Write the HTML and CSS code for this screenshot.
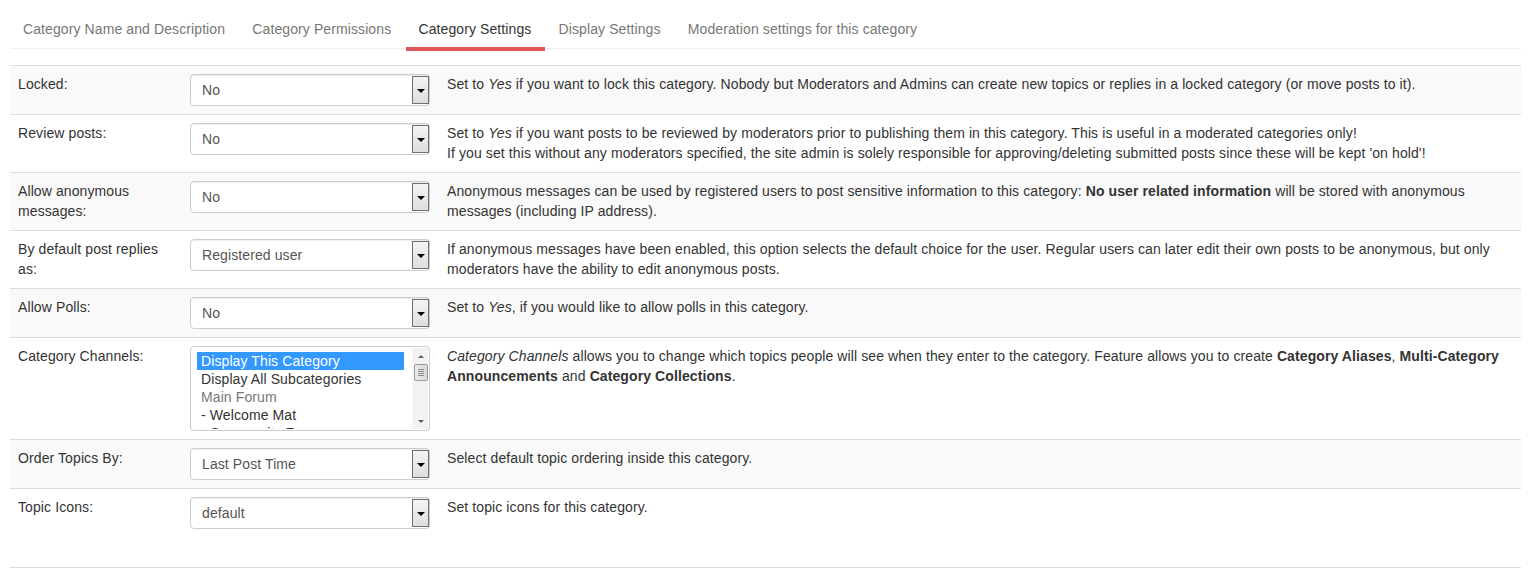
FILE: index.html
```html
<!DOCTYPE html>
<html>
<head>
<meta charset="utf-8">
<title>Category Settings</title>
<link rel="stylesheet" href="styles.css">
</head>
<body>
<div class="page">
  <ul class="tabs">
    <li class="tab">Category Name and Description</li>
    <li class="tab">Category Permissions</li>
    <li class="tab active">Category Settings</li>
    <li class="tab">Display Settings</li>
    <li class="tab">Moderation settings for this category</li>
  </ul>

  <table class="settings">
    <colgroup>
      <col class="c-label">
      <col class="c-ctl">
      <col>
    </colgroup>
    <tr class="odd">
      <td class="label">Locked:</td>
      <td class="ctl"><div class="select"><span class="value">No</span><span class="arrow"><span class="tri"></span></span></div></td>
      <td class="desc">Set to <i>Yes</i> if you want to lock this category. Nobody but Moderators and Admins can create new topics or replies in a locked category (or move posts to it).</td>
    </tr>
    <tr>
      <td class="label">Review posts:</td>
      <td class="ctl"><div class="select"><span class="value">No</span><span class="arrow"><span class="tri"></span></span></div></td>
      <td class="desc">Set to <i>Yes</i> if you want posts to be reviewed by moderators prior to publishing them in this category. This is useful in a moderated categories only!<br>If you set this without any moderators specified, the site admin is solely responsible for approving/deleting submitted posts since these will be kept 'on hold'!</td>
    </tr>
    <tr class="odd">
      <td class="label">Allow anonymous messages:</td>
      <td class="ctl"><div class="select"><span class="value">No</span><span class="arrow"><span class="tri"></span></span></div></td>
      <td class="desc">Anonymous messages can be used by registered users to post sensitive information to this category: <b>No user related information</b> will be stored with anonymous messages (including IP address).</td>
    </tr>
    <tr>
      <td class="label">By default post replies as:</td>
      <td class="ctl"><div class="select"><span class="value">Registered user</span><span class="arrow"><span class="tri"></span></span></div></td>
      <td class="desc">If anonymous messages have been enabled, this option selects the default choice for the user. Regular users can later edit their own posts to be anonymous, but only moderators have the ability to edit anonymous posts.</td>
    </tr>
    <tr class="odd">
      <td class="label">Allow Polls:</td>
      <td class="ctl"><div class="select"><span class="value">No</span><span class="arrow"><span class="tri"></span></span></div></td>
      <td class="desc">Set to <i>Yes</i>, if you would like to allow polls in this category.</td>
    </tr>
    <tr>
      <td class="label">Category Channels:</td>
      <td class="ctl">
        <div class="listbox">
          <div class="options">
            <div class="opt selected">Display This Category</div>
            <div class="opt">Display All Subcategories</div>
            <div class="opt muted">Main Forum</div>
            <div class="opt">- Welcome Mat</div>
            <div class="opt">- Community Forum</div>
          </div>
          <div class="scrollbar">
            <span class="sb-up"></span>
            <span class="sb-thumb"><span class="grip"></span><span class="grip"></span><span class="grip"></span><span class="grip"></span></span>
            <span class="sb-track"></span>
            <span class="sb-down"></span>
          </div>
        </div>
      </td>
      <td class="desc"><i>Category Channels</i> allows you to change which topics people will see when they enter to the category. Feature allows you to create <b>Category Aliases</b>, <b>Multi-Category Announcements</b> and <b>Category Collections</b>.</td>
    </tr>
    <tr class="odd">
      <td class="label">Order Topics By:</td>
      <td class="ctl"><div class="select"><span class="value">Last Post Time</span><span class="arrow"><span class="tri"></span></span></div></td>
      <td class="desc">Select default topic ordering inside this category.</td>
    </tr>
    <tr class="last">
      <td class="label">Topic Icons:</td>
      <td class="ctl"><div class="select"><span class="value">default</span><span class="arrow"><span class="tri"></span></span></div></td>
      <td class="desc">Set topic icons for this category.</td>
    </tr>
  </table>
</div>
</body>
</html>
```

FILE: styles.css
```css
* { box-sizing: border-box; }

html, body {
  margin: 0;
  padding: 0;
  background: #fff;
}

body {
  font-family: "Liberation Sans", Arial, Helvetica, sans-serif;
  font-size: 14px;
  line-height: 20px;
  letter-spacing: 0.1px;
  color: #333;
}

.page {
  padding: 9px 11px 0 10px;
}

.tabs {
  list-style: none;
  margin: 0;
  padding: 0;
  display: flex;
  border-bottom: 1px solid #eee;
}

.tab {
  position: relative;
  padding: 10px 13.6px 9px 13.6px;
  color: #777;
  white-space: nowrap;
}

.tab:first-child {
  margin-left: -0.6px;
}

.tab.active {
  color: #333;
}

.tab.active::after {
  content: "";
  position: absolute;
  left: 1px;
  right: 0;
  bottom: -3px;
  height: 4px;
  background: #e05656;
}

.settings {
  width: 100%;
  margin-top: 16px;
  border-collapse: collapse;
  table-layout: fixed;
  border-bottom: 1px solid #ddd;
}

.c-label { width: 172px; }
.c-ctl { width: 257px; }

.settings td {
  border-top: 1px solid #ddd;
  padding: 8px;
  vertical-align: top;
}

.settings td.desc {
  padding-bottom: 9px;
}

.settings tr.odd td {
  background: #f9f9f9;
}

.settings tr.last td {
  padding-bottom: 38px;
}

.label {
  color: #333;
}

.desc {
  color: #333;
}

.desc b {
  font-weight: bold;
}

/* fake select */
.select {
  display: flex;
  align-items: stretch;
  width: 240px;
  height: 32px;
  border: 1px solid #ccc;
  border-radius: 4px;
  background: #fff;
  box-shadow: inset 0 1px 1px rgba(0, 0, 0, 0.075);
}

.value {
  flex: 1;
  padding-left: 11px;
  line-height: 30px;
  color: #555;
}

.arrow {
  width: 17px;
  margin: 1px 0 1px 0;
  border: 1px solid #707070;
  background: linear-gradient(#f4f4f4, #dedede);
  display: flex;
  align-items: center;
  justify-content: center;
}

.tri {
  width: 0;
  height: 0;
  border-left: 4px solid transparent;
  border-right: 4px solid transparent;
  border-top: 4px solid #000;
  margin-top: 2px;
}

/* listbox */
.listbox {
  display: flex;
  width: 240px;
  height: 85px;
  border: 1px solid #ccc;
  border-radius: 4px;
  background: #fff;
  overflow: hidden;
  padding: 5px 1px 1px 6px;
}

.options {
  flex: 1;
  margin-right: 8px;
  overflow: hidden;
}

.opt {
  height: 18px;
  line-height: 18px;
  padding-left: 4px;
  color: #333;
  white-space: nowrap;
}

.opt.selected {
  background: #3399ff;
  color: #fff;
}

.opt.muted {
  color: #777;
}

.scrollbar {
  width: 16px;
  margin-top: -4px;
  display: flex;
  flex-direction: column;
  align-items: center;
  background: #f2f2f2;
  border-left: 1px solid #f7f7f7;
}

.sb-up, .sb-down {
  width: 16px;
  height: 16px;
  display: flex;
  align-items: center;
  justify-content: center;
}

.sb-up::before {
  content: "";
  border-left: 3px solid transparent;
  border-right: 3px solid transparent;
  border-bottom: 3px solid #606060;
}

.sb-down::before {
  content: "";
  border-left: 3px solid transparent;
  border-right: 3px solid transparent;
  border-top: 3px solid #606060;
}

.sb-thumb {
  width: 14px;
  height: 17px;
  border: 1px solid #9a9a9a;
  border-radius: 2px;
  background: linear-gradient(90deg, #eaeaea, #dadada);
  display: flex;
  flex-direction: column;
  align-items: center;
  justify-content: center;
  gap: 1px;
}

.grip {
  width: 6px;
  height: 1px;
  background: #8a8a8a;
}

.sb-track {
  flex: 1;
}
```
